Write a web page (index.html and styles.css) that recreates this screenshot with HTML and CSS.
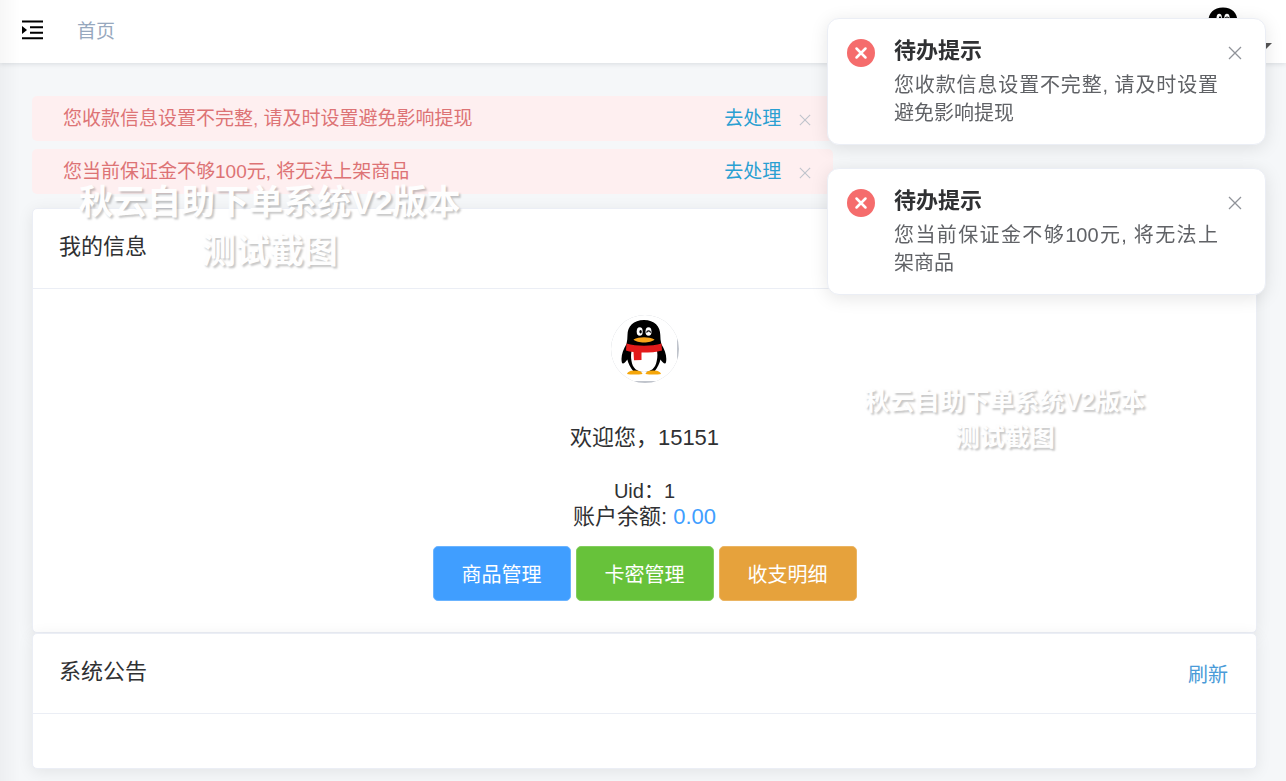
FILE: index.html
```html
<!DOCTYPE html>
<html lang="zh-CN">
<head>
<meta charset="utf-8">
<meta name="viewport" content="width=device-width, initial-scale=1">
<title>首页</title>
<link rel="stylesheet" href="styles.css">
</head>
<body>
<svg class="defs" aria-hidden="true">
  <symbol id="penguin" viewBox="0 0 66 66">
    <rect width="66" height="66" fill="#fff"/>
    <path d="M33 5C22.500 5 16.500 11.500 16.500 20c0 3-.3 6-1 9-3 5-5 10-5 15 0 3 .6 4.500 1.400 4.500 1.300 0 3.100-2 4.400-4 1 4 3 8 6.200 12h21c3-4 5-8 6-12 1.300 2 3.200 4 4.500 4 .8 0 1.300-1.500 1.300-4.500 0-5-2-10-5-15-.7-3-1-6-1-9C49.300 11.500 43.500 5 33 5Z" fill="#000"/>
    <path d="M21 34h24.500c1.200 4 1.200 8 .2 12C44.500 53 40 57 33 57s-11.500-4-12.500-11c-.8-4-.6-8 .5-12Z" fill="#fff"/>
    <path d="M15.500 28.500c10 3 25 3 35 0l.5 7c-5 1.600-12 2.100-20.500 2.100v7.400l-7.500.3-.5-8.300c-3-.3-5.500-.8-7.500-1.500Z" fill="#e31b1b"/>
    <path d="M16 59c1-2.800 4-3.500 8-3.500s7 1 7.500 3.500c-4 .8-12 .8-15.500 0Z" fill="#f5a60a"/>
    <path d="M34.500 59c.5-2.500 3.500-3.500 7.500-3.500s7 .7 8 3.500c-3.500.8-11.500.8-15.500 0Z" fill="#f5a60a"/>
    <ellipse cx="28.700" cy="16.500" rx="3" ry="4.300" fill="#fff"/>
    <ellipse cx="37.500" cy="16.500" rx="3" ry="4.300" fill="#fff"/>
    <ellipse cx="29.600" cy="16.800" rx="1.200" ry="1.800"/>
    <path d="M35.600 17.600c.5-2.200 3.400-2.200 4 0" fill="none" stroke="#000" stroke-width="1.200"/>
    <path d="M22.500 24.500c5.500-3 15.500-3 21 0-3.500 4-17.500 4-21 0Z" fill="#f9a51a"/>
  </symbol>
  <symbol id="cross" viewBox="0 0 14 14"><path d="M1 1l12 12M13 1L1 13" fill="none" stroke="currentColor" stroke-width="1.300"/></symbol>
  <symbol id="error" viewBox="0 0 28 28"><circle cx="14" cy="14" r="14" fill="#f56c6c"/><path d="M9.500 9.500l9 9m0-9l-9 9" stroke="#fff" stroke-width="2.500" stroke-linecap="round"/></symbol>
</svg>

<header class="topbar">
  <button class="fold" type="button" aria-label="展开菜单">
    <svg viewBox="0 0 22 20" width="22" height="20"><path d="M0 1.500h21M8 7.300h13M8 12.700h13M0 18.200h21" stroke="#000" stroke-width="2"/><path d="M0 6v8L5 10Z"/></svg>
  </button>
  <a class="crumb" href="#">首页</a>
  <button class="user" type="button" aria-label="用户菜单">
    <svg class="user-pic"><use href="#penguin"/></svg>
    <svg class="caret" viewBox="0 0 12 6"><path d="M0 0h12L6 6Z" fill="#555"/></svg>
  </button>
</header>

<main class="content">
  <div class="alert" role="alert">
    <span class="alert-text">您收款信息设置不完整, 请及时设置避免影响提现</span>
    <a class="alert-link" href="#">去处理</a>
    <button class="alert-close" type="button" aria-label="关闭"><svg><use href="#cross"/></svg></button>
  </div>
  <div class="alert" role="alert">
    <span class="alert-text">您当前保证金不够100元, 将无法上架商品</span>
    <a class="alert-link" href="#">去处理</a>
    <button class="alert-close" type="button" aria-label="关闭"><svg><use href="#cross"/></svg></button>
  </div>

  <section class="card info">
    <div class="card-head"><h2>我的信息</h2></div>
    <div class="profile">
      <div class="avatar"><svg><use href="#penguin"/></svg></div>
      <p class="welcome">欢迎您，15151</p>
      <p class="uid">Uid：1</p>
      <p class="balance">账户余额: <span>0.00</span></p>
      <div class="actions">
        <button class="btn blue" type="button">商品管理</button>
        <button class="btn green" type="button">卡密管理</button>
        <button class="btn orange" type="button">收支明细</button>
      </div>
    </div>
  </section>

  <section class="card">
    <div class="card-head"><h2>系统公告</h2><button class="refresh" type="button">刷新</button></div>
    <div class="notice"></div>
  </section>
</main>

<div class="mark mark-large">秋云自助下单系统V2版本<br>测试截图</div>
<div class="mark mark-small">秋云自助下单系统V2版本<br>测试截图</div>

<aside class="toasts">
  <div class="toast" role="alert">
    <svg class="toast-icon"><use href="#error"/></svg>
    <div class="toast-body">
      <h3>待办提示</h3>
      <p>您收款信息设置不完整, 请及时设置避免影响提现</p>
    </div>
    <button class="toast-close" type="button" aria-label="关闭"><svg><use href="#cross"/></svg></button>
  </div>
  <div class="toast" role="alert">
    <svg class="toast-icon"><use href="#error"/></svg>
    <div class="toast-body">
      <h3>待办提示</h3>
      <p>您当前保证金不够100元, 将无法上架商品</p>
    </div>
    <button class="toast-close" type="button" aria-label="关闭"><svg><use href="#cross"/></svg></button>
  </div>
</aside>
</body>
</html>
```
FILE: styles.css
```css
* { box-sizing: border-box; margin: 0; padding: 0; }

body {
  min-height: 100vh;
  background: #f5f7f9;
  color: #303133;
  font-family: "Liberation Sans", "Noto Sans CJK SC", sans-serif;
  font-size: 20px;
}

/* shade cast by the collapsed side menu */
body::before {
  content: "";
  position: fixed;
  inset: 0 auto 0 0;
  width: 20px;
  background: linear-gradient(to right, rgba(0, 0, 0, .03), transparent);
  pointer-events: none;
  z-index: 2;
}

button { border: 0; background: none; font: inherit; color: inherit; cursor: pointer; }
a { text-decoration: none; }
svg { display: block; }
.defs { position: absolute; width: 0; height: 0; }

.topbar {
  display: flex;
  align-items: center;
  height: 63px;
  padding: 0 14px 0 22px;
  background: #fff;
  box-shadow: 0 1px 5px rgba(0, 21, 41, .12);
  position: relative;
}
.fold { padding-bottom: 3px; }
.crumb { margin: 0 auto 0 33px; font-size: 19px; line-height: 28px; color: #97a8be; }
.user { display: flex; align-items: flex-end; gap: 6px; }
.user-pic { width: 62px; height: 58px; }
.caret { width: 12px; height: 6px; margin-bottom: 12px; }

.content { padding: 33px 29px 12px 32px; }

.alert {
  display: flex;
  align-items: center;
  width: 65.4%;
  height: 45px;
  margin-bottom: 8px;
  padding: 1px 22px 0 31px;
  border-radius: 5px;
  background: #feeff0;
  font-size: 19px;
  line-height: 28px;
}
.alert-text { flex: 1; color: #dd7375; }
.alert-link { color: #2a9fd2; }
.alert-close { margin-left: 18px; padding-top: 2px; color: #c0c4cc; }
.alert-close svg { width: 12px; height: 12px; }

.card {
  border: 1px solid #ebeef5;
  border-radius: 5px;
  background: #fff;
  box-shadow: 0 3px 16px rgba(0, 0, 0, .08);
}
.info { margin-top: 14px; }
.card-head {
  display: flex;
  justify-content: space-between;
  align-items: flex-start;
  min-height: 80px;
  padding: 25px 28px 22px 26px;
  border-bottom: 1px solid #ebeef5;
}
h2 { font-size: 22px; font-weight: 400; line-height: 26px; }
.refresh { font-size: 20px; line-height: 32px; color: #4a9bd8; }

.profile {
  display: flex;
  flex-direction: column;
  align-items: center;
  padding: 26px 27px 31px;
  font-size: 22px;
  line-height: 25px;
}
.avatar {
  width: 68px;
  height: 68px;
  border-radius: 50%;
  overflow: hidden;
  background: #c0c4cc;
}
.avatar svg { width: 66px; height: 66px; }
.welcome { margin: 42px 0 29px; }
.uid { font-size: 20px; }
.balance span { color: #409eff; }
.actions { display: flex; gap: 5px; margin-top: 17px; }
.btn {
  padding: 3px 28px 0;
  min-width: 138px;
  height: 55px;
  border: 1px solid;
  border-radius: 5px;
  color: #fff;
  font-size: 20px;
}
.blue { background: #409eff; border-color: #6bb4ff; }
.green { background: #67c23a; border-color: #83ce5e; }
.orange { background: #e6a23c; border-color: #ebb563; }
.notice { min-height: 54px; }

.toasts {
  position: fixed;
  top: 18px;
  right: 20px;
  z-index: 10;
  display: flex;
  flex-direction: column;
  gap: 23px;
  width: 439px;
}
.toast {
  display: flex;
  gap: 19px;
  padding: 20px 26px 17px 19px;
  border: 1px solid #ebeef5;
  border-radius: 12px;
  background: #fff;
  box-shadow: 0 3px 18px rgba(0, 0, 0, .1);
  position: relative;
}
.toast-icon { width: 28px; height: 28px; flex: none; }
.toast-body { width: 324px; }
h3 { font-size: 22px; font-weight: 700; line-height: 24px; }
.toast p { margin-top: 8px; font-size: 20px; line-height: 28px; color: #606266; text-align: justify; }
.toast-close { position: absolute; top: 27px; right: 23px; color: #909399; }
.toast-close svg { width: 14px; height: 14px; }

/* watermarks lie over the page */
.mark {
  position: absolute;
  z-index: 5;
  color: #fefefe;
  font-weight: 700;
  text-align: center;
  text-shadow: 2px 2px 2px rgba(0, 0, 0, .22);
  white-space: nowrap;
  pointer-events: none;
}
.mark-large { top: 178px; left: 79px; font-size: 34px; line-height: 49px; }
.mark-small { top: 383px; right: 141px; font-size: 25px; line-height: 36px; }
```
